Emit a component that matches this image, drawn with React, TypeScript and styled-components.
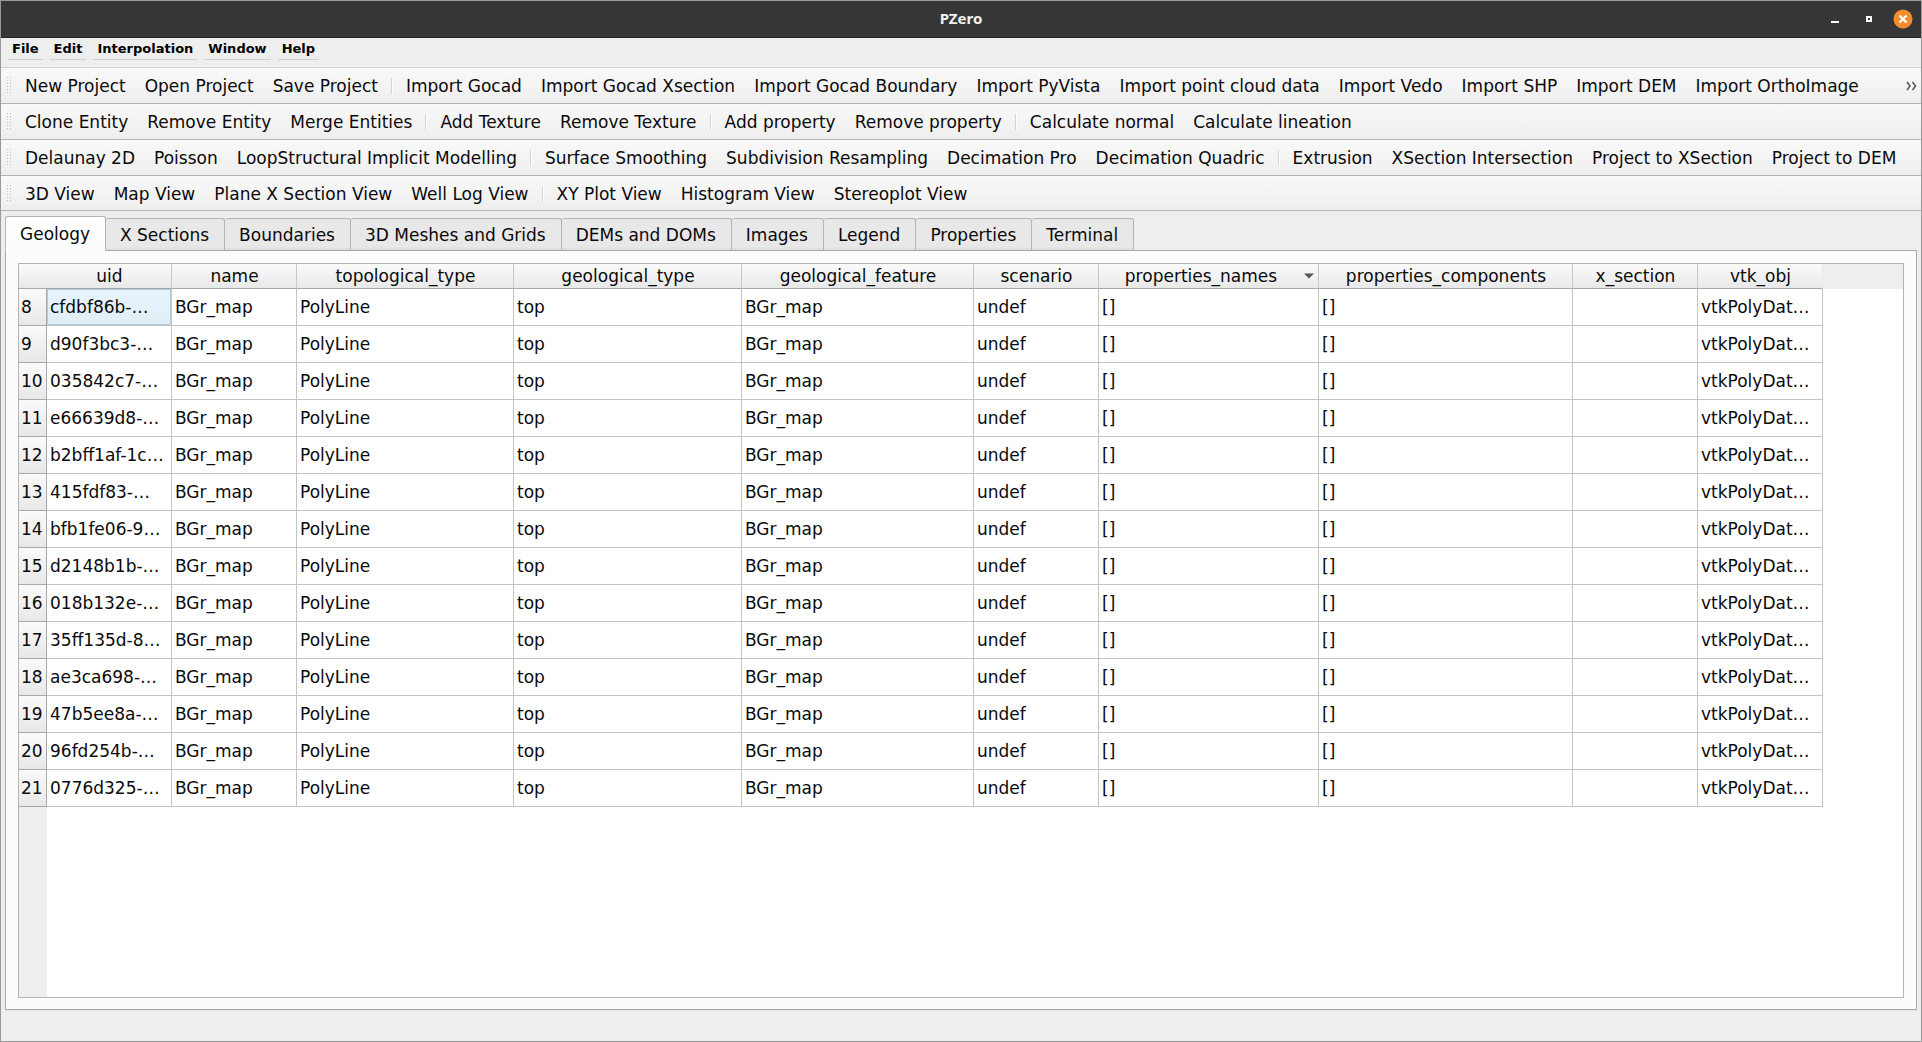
import React, { useState } from "react";
import styled, { createGlobalStyle } from "styled-components";

const GlobalStyle = createGlobalStyle`
  *, *::before, *::after { box-sizing: border-box; }
  body { margin: 0; }
  button {
    margin: 0;
    padding: 0;
    border: 0;
    background: none;
    color: inherit;
    font: inherit;
    white-space: nowrap;
  }
`;

const AppWindow = styled.div`
  display: flex;
  flex-direction: column;
  min-height: 100vh;
  border: 1px solid #999999;
  background: #eeeeee;
  color: #0a0a0a;
  font: 17px/20px "DejaVu Sans", sans-serif;
`;

const TitleBar = styled.header`
  display: grid;
  grid-template-columns: 1fr auto 1fr;
  align-items: center;
  height: 37px;
  border-bottom: 1px solid #222222;
  background: #363636;
`;

const Title = styled.h1`
  grid-column: 2;
  margin: 0;
  padding-bottom: 2px;
  color: #f2f2f2;
  font: 700 15px/20px "Noto Sans", sans-serif;
`;

const WindowControls = styled.div`
  display: flex;
  justify-content: flex-end;
  gap: 14px;
  padding-right: 8px;
`;

const WindowButton = styled.button`
  display: flex;
  width: 20px;
  height: 20px;
`;

const MenuBar = styled.nav`
  display: flex;
  align-items: flex-start;
  gap: 7px;
  height: 30px;
  padding-left: 7px;
  border-bottom: 1px solid #d2d2d2;
`;

const MenuItem = styled.button`
  height: 22px;
  padding: 0 4px;
  border-bottom: 1px solid #d0d0d0;
  color: #000000;
  font-size: 13px;
  font-weight: 700;
  line-height: 20px;
`;

const ToolBar = styled.div`
  display: flex;
  align-items: center;
  height: 36px;
  padding-left: 6px;
  border-bottom: 1px solid #b4b4b4;
  background: linear-gradient(#f9f9f9, #eeeeee);

  &:last-child {
    height: 35px;
    padding-top: 1px;
  }
`;

const Grip = styled.span`
  flex: none;
  display: flex;
  width: 5px;
  margin-right: 3px;
`;

const ToolButton = styled.button`
  flex: none;
  height: 28px;
  padding: 0 9px 0 10px;
`;

const Separator = styled.span`
  flex: none;
  width: 2px;
  height: 16px;
  margin: 0 3px 0 4px;
  border-left: 1px solid #d4d4d4;
  background: #ffffff;
`;

const MoreButton = styled.button`
  display: flex;
  margin-left: auto;
  padding-right: 4px;
`;

const Workspace = styled.main`
  display: flex;
  flex: 1;
  flex-direction: column;
  padding: 5px 4px 31px;
`;

const TabList = styled.div`
  display: flex;
  align-items: flex-end;
  height: 35px;
  margin-bottom: -1px;
  z-index: 1;
`;

const Tab = styled.button<{ $active: boolean }>`
  height: ${(p) => (p.$active ? 35 : 33)}px;
  padding: 0 15px 0 14px;
  border: 1px solid #b4b4b4;
  border-bottom-color: ${(p) => (p.$active ? "#fdfdfd" : "#a8a8a8")};
  border-left-width: ${(p) => (p.$active ? 1 : 0)}px;
  border-radius: 3px 3px 0 0;
  background: ${(p) => (p.$active ? "linear-gradient(#ffffff, #fcfcfc)" : "linear-gradient(#e8e8e8 88%, #dddddd)")};
`;

const Pane = styled.section`
  display: flex;
  flex: 1;
  padding: 12px 12px 11px;
  border: 1px solid #a8a8a8;
  background: #fcfcfc;
  box-shadow: 0 1px #e2e2e2;
`;

const TableFrame = styled.div`
  flex: 1;
  border: 1px solid #b4b4b4;
  background:
    linear-gradient(#eeeeee, #eeeeee) 0 0 / 100% 25px no-repeat,
    linear-gradient(#eeeeee, #eeeeee) 0 0 / 28px 100% no-repeat,
    #ffffff;
`;

const DataTable = styled.table`
  table-layout: fixed;
  width: 1px;
  border-collapse: separate;
  border-spacing: 0;
`;

const Column = styled.col<{ $width: number }>`
  width: ${(p) => p.$width}px;
`;

const HeaderCell = styled.th`
  height: 25px;
  padding: 0;
  border-right: 1px solid #c8c8c8;
  border-bottom: 1px solid #a8a8a8;
  background: linear-gradient(#fafafa, #f2f2f2 50%, #e8e8e8);
  font-weight: 400;

  &:last-child { border-right-color: #e8e8e8; }
`;

const CornerCell = styled.td`
  padding: 0;
  border-bottom: 1px solid #a8a8a8;
  background: linear-gradient(#fafafa, #f2f2f2 50%, #e8e8e8);
`;

const HeaderButton = styled.button<{ $sorted: boolean }>`
  display: flex;
  align-items: center;
  justify-content: center;
  width: 100%;
  height: 24px;
  padding: ${(p) => (p.$sorted ? "0 3px 0 0" : "0 0 0 1px")};
`;

const HeaderLabel = styled.span`
  flex: 1;
`;

const RowHeader = styled.th`
  height: 37px;
  padding: 0 0 0 2px;
  border-right: 1px solid #a8a8a8;
  border-bottom: 1px solid #a8a8a8;
  background: linear-gradient(#fafafa, #e8e8e8);
  font-weight: 400;
  text-align: left;
`;

const Cell = styled.td<{ $selected: boolean }>`
  overflow: hidden;
  height: 37px;
  padding: 0 0 0 3px;
  border-right: 1px solid #c4c4c4;
  border-bottom: 1px solid #c4c4c4;
  background: ${(p) => (p.$selected ? "linear-gradient(#e8f4fd, #e2eef6)" : "#ffffff")};
  box-shadow: ${(p) => (p.$selected ? "inset 0 0 0 1px #b0cbdf" : "none")};
  white-space: nowrap;
`;

const SEP = "|";

const menus = ["File", "Edit", "Interpolation", "Window", "Help"];

const toolbars = [
  {
    name: "Project",
    overflow: true,
    actions: ["New Project", "Open Project", "Save Project", SEP, "Import Gocad", "Import Gocad Xsection", "Import Gocad Boundary", "Import PyVista", "Import point cloud data", "Import Vedo", "Import SHP", "Import DEM", "Import OrthoImage"],
  },
  {
    name: "Edit",
    overflow: false,
    actions: ["Clone Entity", "Remove Entity", "Merge Entities", SEP, "Add Texture", "Remove Texture", SEP, "Add property", "Remove property", SEP, "Calculate normal", "Calculate lineation"],
  },
  {
    name: "Interpolation",
    overflow: false,
    actions: ["Delaunay 2D", "Poisson", "LoopStructural Implicit Modelling", SEP, "Surface Smoothing", "Subdivision Resampling", "Decimation Pro", "Decimation Quadric", SEP, "Extrusion", "XSection Intersection", "Project to XSection", "Project to DEM"],
  },
  {
    name: "Views",
    overflow: false,
    actions: ["3D View", "Map View", "Plane X Section View", "Well Log View", SEP, "XY Plot View", "Histogram View", "Stereoplot View"],
  },
];

const tabs = ["Geology", "X Sections", "Boundaries", "3D Meshes and Grids", "DEMs and DOMs", "Images", "Legend", "Properties", "Terminal"];

const columns = [
  { name: "uid", width: 125 },
  { name: "name", width: 125 },
  { name: "topological_type", width: 217 },
  { name: "geological_type", width: 228 },
  { name: "geological_feature", width: 232 },
  { name: "scenario", width: 125 },
  { name: "properties_names", width: 220 },
  { name: "properties_components", width: 254 },
  { name: "x_section", width: 125 },
  { name: "vtk_obj", width: 125 },
];

const uids = ["cfdbf86b-…", "d90f3bc3-…", "035842c7-…", "e66639d8-…", "b2bff1af-1c…", "415fdf83-…", "bfb1fe06-9…", "d2148b1b-…", "018b132e-…", "35ff135d-8…", "ae3ca698-…", "47b5ee8a-…", "96fd254b-…", "0776d325-…"];

const rows = uids.map((uid, i) => ({
  index: i + 8,
  values: [uid, "BGr_map", "PolyLine", "top", "BGr_map", "undef", "[]", "[]", "", "vtkPolyDat…"],
}));

const sortedColumn = "properties_names";

function GripDots() {
  return (
    <svg width="5" height="17" viewBox="0 0 5 17" aria-hidden="true">
      {[0, 3, 6, 9, 12, 15].map((y) => (
        <path key={y} d={`M0 ${y}h1v1h-1zM3 ${y}h1v1h-1z`} fill="#bbbbbb" />
      ))}
    </svg>
  );
}

function SortArrow() {
  return (
    <svg width="12" height="6" viewBox="0 0 12 6" aria-hidden="true">
      <path d="M1 0.5H11L6 5.5Z" fill="#555555" />
    </svg>
  );
}

export default function App() {
  const [activeTab, setActiveTab] = useState("Geology");
  const [selected, setSelected] = useState("8-0");

  return (
    <AppWindow>
      <GlobalStyle />
      <TitleBar>
        <Title>PZero</Title>
        <WindowControls>
          <WindowButton aria-label="Minimize">
            <svg width="20" height="20"><path d="M6 12h8v2H6z" fill="#ffffff" /></svg>
          </WindowButton>
          <WindowButton aria-label="Maximize">
            <svg width="20" height="20"><path d="M8 8h4v4H8z" fill="none" stroke="#ffffff" strokeWidth="2" /></svg>
          </WindowButton>
          <WindowButton aria-label="Close">
            <svg width="20" height="20">
              <circle cx="10" cy="10" r="9.5" fill="#f58d2e" />
              <path d="M6.5 6.5l7 7M13.5 6.5l-7 7" stroke="#ffffff" strokeWidth="2.2" />
            </svg>
          </WindowButton>
        </WindowControls>
      </TitleBar>

      <MenuBar aria-label="Main menu">
        {menus.map((m) => <MenuItem key={m}>{m}</MenuItem>)}
      </MenuBar>

      <div>
        {toolbars.map((bar) => (
          <ToolBar key={bar.name} role="toolbar" aria-label={bar.name}>
            <Grip><GripDots /></Grip>
            {bar.actions.map((a, i) => (a === SEP ? <Separator key={i} /> : <ToolButton key={a}>{a}</ToolButton>))}
            {bar.overflow && (
              <MoreButton aria-label="More actions">
                <svg width="11" height="10" viewBox="0 0 11 10">
                  <path d="M1 1l3 4-3 4M6.5 1l3 4-3 4" fill="none" stroke="#555555" strokeWidth="1.5" />
                </svg>
              </MoreButton>
            )}
          </ToolBar>
        ))}
      </div>

      <Workspace>
        <TabList role="tablist">
          {tabs.map((t) => (
            <Tab key={t} role="tab" aria-selected={t === activeTab} $active={t === activeTab} onClick={() => setActiveTab(t)}>
              {t}
            </Tab>
          ))}
        </TabList>
        <Pane role="tabpanel" aria-label={activeTab}>
          <TableFrame>
            <DataTable>
              <colgroup>
                <Column $width={28} />
                {columns.map((c) => <Column key={c.name} $width={c.width} />)}
              </colgroup>
              <thead>
                <tr>
                  <CornerCell />
                  {columns.map((c) => (
                    <HeaderCell key={c.name} scope="col" aria-sort={c.name === sortedColumn ? "descending" : undefined}>
                      <HeaderButton $sorted={c.name === sortedColumn}>
                        <HeaderLabel>{c.name}</HeaderLabel>
                        {c.name === sortedColumn && <SortArrow />}
                      </HeaderButton>
                    </HeaderCell>
                  ))}
                </tr>
              </thead>
              <tbody>
                {rows.map((row) => (
                  <tr key={row.index}>
                    <RowHeader scope="row">{row.index}</RowHeader>
                    {row.values.map((v, i) => {
                      const id = `${row.index}-${i}`;
                      return (
                        <Cell key={id} $selected={id === selected} onClick={() => setSelected(id)}>
                          {v}
                        </Cell>
                      );
                    })}
                  </tr>
                ))}
              </tbody>
            </DataTable>
          </TableFrame>
        </Pane>
      </Workspace>
    </AppWindow>
  );
}
